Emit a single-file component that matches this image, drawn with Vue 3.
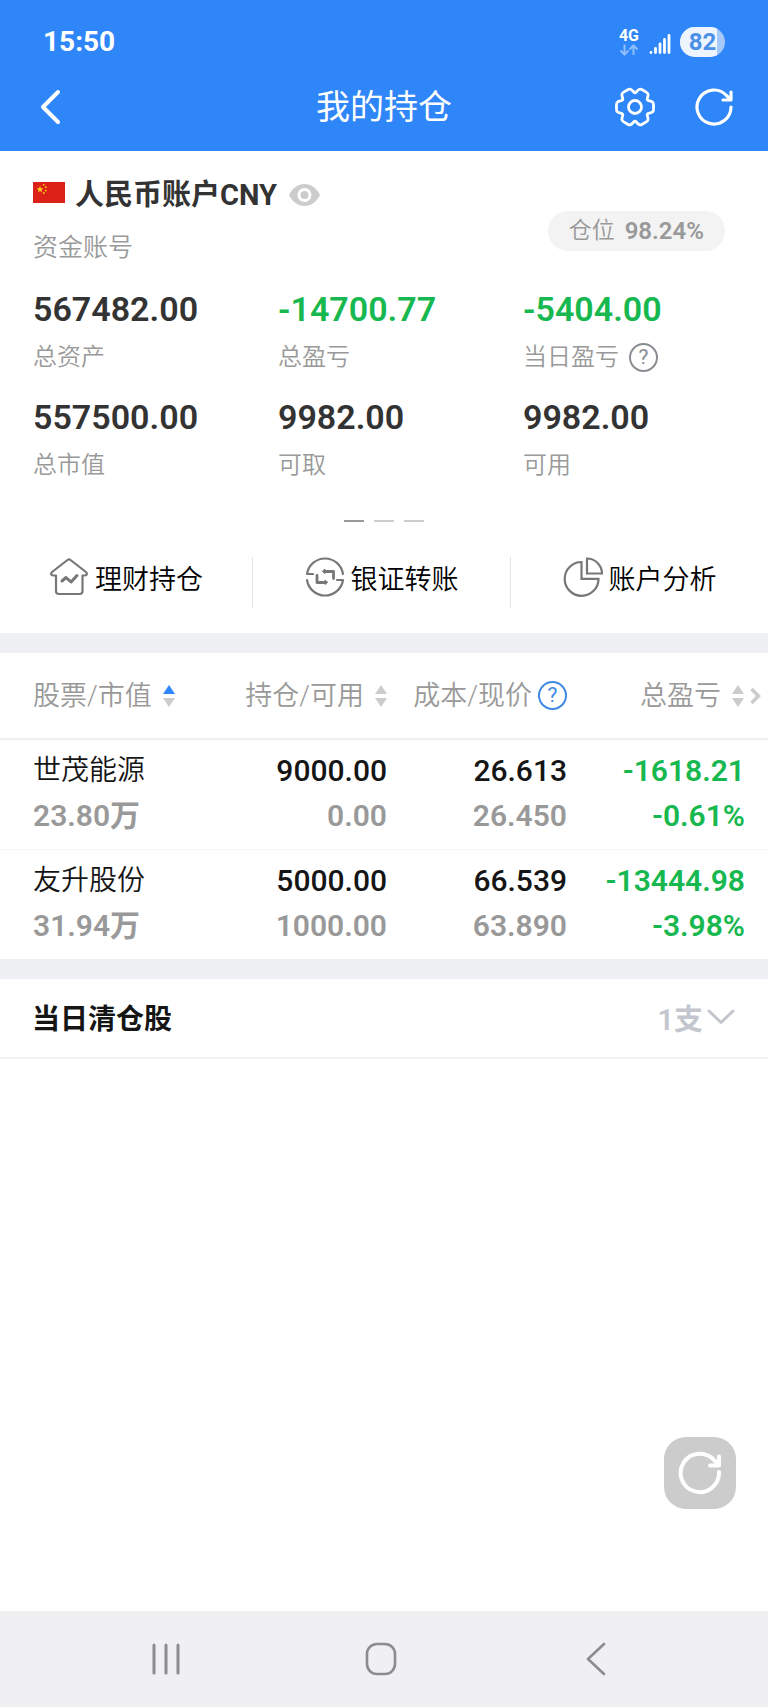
<script setup>
import { computed } from 'vue'

const battery = 82

const metrics = [
  { value: '567482.00', label: '总资产' },
  { value: '-14700.77', label: '总盈亏' },
  { value: '-5404.00', label: '当日盈亏', help: true },
  { value: '557500.00', label: '总市值' },
  { value: '9982.00', label: '可取' },
  { value: '9982.00', label: '可用' },
]

const holdings = [
  { name: '世茂能源', worth: '23.80万', held: '9000.00', usable: '0.00', cost: '26.613', price: '26.450', gain: '-1618.21', rate: '-0.61%' },
  { name: '友升股份', worth: '31.94万', held: '5000.00', usable: '1000.00', cost: '66.539', price: '63.890', gain: '-13444.98', rate: '-3.98%' },
]

const isLoss = (text) => text.startsWith('-')

// Six-toothed gear outline with rounded corners, centred on the origin.
const gearPath = computed(() => {
  const corners = []
  for (let k = 0; k < 6; k++) {
    for (const [offset, radius] of [[-30, 13.5], [-19, 17.5], [-13, 19], [13, 19], [19, 17.5]]) {
      const a = ((k * 60 + offset) * Math.PI) / 180
      corners.push([radius * Math.cos(a), radius * Math.sin(a)])
    }
  }
  const n = corners.length
  let d = ''
  corners.forEach((p, i) => {
    const before = corners[(i + n - 1) % n]
    const after = corners[(i + 1) % n]
    const toward = (q) => {
      const len = Math.hypot(q[0] - p[0], q[1] - p[1])
      const t = Math.min(2, len / 2) / len
      return `${(p[0] + (q[0] - p[0]) * t).toFixed(2)} ${(p[1] + (q[1] - p[1]) * t).toFixed(2)}`
    }
    d += `${i ? 'L' : 'M'}${toward(before)}Q${p[0].toFixed(2)} ${p[1].toFixed(2)} ${toward(after)}`
  })
  return d + 'Z'
})
</script>

<template>
  <div class="page">
    <header class="top">
      <div class="status">
        <span class="clock">15:50</span>
        <div class="signals">
          <div class="network">
            <span>4G</span>
            <svg width="20" height="12" viewBox="0 0 20 12" fill="none" stroke="#8fbdfb" stroke-width="2">
              <path d="M5.500 .5V10M1.500 6.500l4 4 4-4M14.500 11V1.500M10.500 5.500l4-4 4 4" />
            </svg>
          </div>
          <svg class="bars" width="22" height="22" viewBox="0 0 22 22" stroke="#fff" stroke-width="2.8" stroke-linecap="round">
            <path d="M2 19.500v0M6.500 15.500v4M11 11v8.500M15.500 6.500v13M20 2.500v17" />
          </svg>
          <div class="battery">
            <div class="charge" :style="{ width: battery + '%' }"></div>
            <span>{{ battery }}</span>
          </div>
        </div>
      </div>
      <nav class="bar">
        <button class="icon-btn" aria-label="返回">
          <svg width="22" height="36" viewBox="0 0 22 36" fill="none" stroke="#fff" stroke-width="4" stroke-linecap="round" stroke-linejoin="round">
            <path d="M19 3 4 18l15 15" />
          </svg>
        </button>
        <h1>我的持仓</h1>
        <div class="tools">
          <button class="icon-btn" aria-label="设置">
            <svg width="42" height="42" viewBox="-21 -21 42 42" fill="none" stroke="#fff" stroke-width="2.800" stroke-linejoin="round">
              <path :d="gearPath" />
              <circle r="6.500" />
            </svg>
          </button>
          <button class="icon-btn" aria-label="刷新">
            <svg width="40" height="40" viewBox="-20 -20 40 40" fill="none" stroke="#fff" stroke-width="3.200" stroke-linecap="round" stroke-linejoin="round">
              <path d="M17 0A17 17 0 1 1 12.500-11.500L16-8" />
              <path d="M17-15v8H9" />
            </svg>
          </button>
        </div>
      </nav>
    </header>

    <main class="content">
      <section class="account">
        <div class="head">
          <div>
            <h2 class="currency">
              <svg class="flag" width="32" height="21" viewBox="0 0 32 21">
                <path d="M0 0h32v21H0z" fill="#dc2118" />
                <g fill="#fbd21c">
                  <path d="m7 4 .9 2.300 2.500.1-2 1.500.7 2.400L7 8.900l-2.100 1.400.7-2.400-2-1.500 2.500-.1z" />
                  <circle cx="10.800" cy="2.800" r=".9" />
                  <circle cx="12.800" cy="5.200" r=".9" />
                  <circle cx="12.800" cy="8.600" r=".9" />
                  <circle cx="10.800" cy="11" r=".9" />
                </g>
              </svg>
              人民币账户CNY
              <button class="icon-btn" aria-label="隐藏金额">
                <svg width="31" height="24" viewBox="0 0 31 24">
                  <path d="M0 12C4 4.500 9 1 15.500 1S27 4.500 31 12c-4 7.500-9 11-15.500 11S4 19.500 0 12z" fill="#ccc" />
                  <circle cx="15.500" cy="12" r="5.500" fill="#ccc" stroke="#fff" stroke-width="3" />
                </svg>
              </button>
            </h2>
            <p class="number">资金账号</p>
          </div>
          <p class="ratio">仓位 <b>98.24%</b></p>
        </div>

        <dl class="metrics">
          <div v-for="m in metrics" :key="m.label">
            <dt>
              {{ m.label }}
              <button v-if="m.help" class="help" aria-label="当日盈亏说明">?</button>
            </dt>
            <dd :class="{ loss: isLoss(m.value) }">{{ m.value }}</dd>
          </div>
        </dl>

        <div class="pager"><i class="on"></i><i></i><i></i></div>

        <div class="actions">
          <button>
            <svg width="40" height="40" viewBox="0 0 40 40" fill="none" stroke="#777" stroke-width="2.200" stroke-linecap="round" stroke-linejoin="round">
              <path d="M7 18.500H4.500Q.5 18 3 15L18.500 3q1.500-1.200 3 0L37 15q2.500 3-1.500 3.500H33.500V34q0 3-3 3H10q-3 0-3-3z" />
              <path d="m13 24 4-3.500 5 4.500 6-6.500" stroke-width="3" />
            </svg>
            理财持仓
          </button>
          <button>
            <svg width="40" height="40" viewBox="0 0 40 40" fill="none" stroke="#777" stroke-width="2.200" stroke-linecap="round" stroke-linejoin="round">
              <path d="M8 17H2A18.200 18.200 0 0 1 38 17M32 23h6A18.200 18.200 0 0 1 2 23" />
              <path d="M12 18.500V25.500h8M20 14.500h8.500V21.500" stroke-width="2.800" />
              <path d="M20 12.500v4l-2.500-2zM20 23.500v4l2.500-2z" fill="#777" stroke-width="1" />
            </svg>
            银证转账
          </button>
          <button>
            <svg width="40" height="40" viewBox="0 0 40 40" fill="none" stroke="#777" stroke-width="2.200">
              <path d="M18.500 5A16.900 16.900 0 1 0 35.500 21.900h-17z" />
              <path d="M24 1.500V16.500h15A15.200 15.200 0 0 0 24 1.500z" />
            </svg>
            账户分析
          </button>
        </div>
      </section>

      <section class="holdings">
        <table>
          <thead>
            <tr>
              <th scope="col">
                <div class="cell">
                  <button class="sort up">股票/市值
                    <svg width="12" height="22" viewBox="0 0 12 22"><path class="asc" d="M6 0l6 9H0z" /><path d="M6 22l6-9H0z" /></svg>
                  </button>
                </div>
              </th>
              <th scope="col">
                <div class="cell">
                  <button class="sort">持仓/可用
                    <svg width="12" height="22" viewBox="0 0 12 22"><path class="asc" d="M6 0l6 9H0z" /><path d="M6 22l6-9H0z" /></svg>
                  </button>
                </div>
              </th>
              <th scope="col">
                <div class="cell">
                  成本/现价
                  <button class="help blue" aria-label="成本说明">?</button>
                </div>
              </th>
              <th scope="col">
                <div class="cell">
                  <button class="sort">总盈亏
                    <svg width="12" height="22" viewBox="0 0 12 22"><path class="asc" d="M6 0l6 9H0z" /><path d="M6 22l6-9H0z" /></svg>
                  </button>
                  <svg width="11" height="18" viewBox="0 0 11 18" fill="none" stroke="#ccc" stroke-width="3.500"><path d="m1.500 2 7 7-7 7" /></svg>
                </div>
              </th>
            </tr>
          </thead>
          <tbody>
            <tr v-for="h in holdings" :key="h.name">
              <td><span class="name">{{ h.name }}</span><span class="sub">{{ h.worth }}</span></td>
              <td><span>{{ h.held }}</span><span class="sub">{{ h.usable }}</span></td>
              <td><span>{{ h.cost }}</span><span class="sub">{{ h.price }}</span></td>
              <td class="loss"><span>{{ h.gain }}</span><span>{{ h.rate }}</span></td>
            </tr>
          </tbody>
        </table>
      </section>

      <section class="cleared">
        <h2>当日清仓股</h2>
        <button aria-label="展开当日清仓股">
          1支
          <svg width="28" height="16" viewBox="0 0 28 16" fill="none" stroke="#c3c6ce" stroke-width="3" stroke-linecap="round" stroke-linejoin="round"><path d="m2 2 12 11.500L26 2" /></svg>
        </button>
      </section>

      <button class="refresh" aria-label="刷新持仓">
        <svg width="46" height="46" viewBox="-23 -23 46 46" fill="none" stroke="#fff" stroke-width="4" stroke-linecap="round" stroke-linejoin="round">
          <path d="M19-1A19.200 19.200 0 1 1 14.500-12.500L18-9" />
          <path d="M19-16.500v9h-9" />
        </svg>
      </button>
    </main>

    <footer class="system">
      <button aria-label="最近任务">
        <svg width="30" height="34" viewBox="0 0 30 34" stroke="#8c8c8e" stroke-width="3" stroke-linecap="round"><path d="M3 3v28M15 3v28M27 3v28" /></svg>
      </button>
      <button aria-label="主屏幕">
        <svg width="32" height="34" viewBox="0 0 32 34" fill="none" stroke="#8c8c8e" stroke-width="2.600"><rect x="2" y="2" width="28" height="30" rx="10" /></svg>
      </button>
      <button aria-label="后退">
        <svg width="20" height="34" viewBox="0 0 20 34" fill="none" stroke="#8c8c8e" stroke-width="2.600" stroke-linecap="round" stroke-linejoin="round"><path d="M18 2 2 17l16 15" /></svg>
      </button>
    </footer>
  </div>
</template>

<style>
body {
  margin: 0;
  background: #fff;
}
</style>

<style scoped>
.page {
  min-height: 100vh;
  display: flex;
  flex-direction: column;
  background: #fff;
  color: #151515;
  font-family: Roboto, "Noto Sans CJK SC", sans-serif;
  font-weight: 350;
}
button {
  border: 0;
  padding: 0;
  background: none;
  color: inherit;
  font: inherit;
  cursor: pointer;
}
h1, h2, p, dl, dd {
  margin: 0;
}
svg {
  display: block;
  flex: none;
}
.icon-btn {
  display: flex;
}
.loss {
  color: #17b84f;
}

.top {
  background: #2f86f8;
  color: #fff;
  padding: 0 33px 21px 39px;
}
.status {
  height: 84px;
  padding: 0 10px 0 4px;
  display: flex;
  align-items: center;
  justify-content: space-between;
}
.clock {
  font-size: 28px;
  font-weight: 700;
  line-height: 32px;
}
.signals {
  display: flex;
  align-items: center;
}
.network {
  font-size: 16px;
  font-weight: 700;
  line-height: 16px;
}
.bars {
  margin: 4px 9px 0 10px;
}
.battery {
  position: relative;
  width: 45px;
  height: 30px;
  border-radius: 15px;
  overflow: hidden;
  background: #a6c9fc;
  color: #4a90e6;
  font-size: 24px;
  font-weight: 700;
  line-height: 30px;
  text-align: center;
}
.charge {
  position: absolute;
  inset: 0 auto 0 0;
  background: #eef5ff;
}
.battery span {
  position: relative;
}
.bar {
  height: 46px;
  margin-right: 6px;
  display: grid;
  grid-template-columns: 1fr auto 1fr;
  align-items: center;
}
.bar h1 {
  font-size: 34px;
  font-weight: 400;
  line-height: 46px;
}
.tools {
  display: flex;
  align-items: center;
  justify-content: flex-end;
  gap: 38px;
  margin-right: -5px;
}

.content {
  flex: 1;
  display: flex;
  flex-direction: column;
}
.account {
  padding-bottom: 25px;
  border-bottom: 20px solid #eff0f3;
}
.head {
  display: flex;
  justify-content: space-between;
  padding: 26px 43px 23px 33px;
}
.currency {
  display: flex;
  align-items: center;
  gap: 10px;
  height: 36px;
  color: #333;
  font-size: 29px;
  font-weight: 700;
  line-height: 36px;
}
.flag {
  margin-bottom: 6px;
}
.currency .icon-btn {
  margin-left: 2px;
}
.number {
  margin-top: 17px;
  color: #999;
  font-size: 25px;
  line-height: 36px;
}
.ratio {
  display: flex;
  align-items: center;
  gap: 10px;
  align-self: flex-end;
  height: 40px;
  margin-bottom: 15px;
  padding: 0 21px;
  border-radius: 20px;
  background: #f3f3f3;
  color: #999;
  font-size: 23px;
  line-height: 40px;
}
.ratio b {
  font-size: 24px;
  font-weight: 600;
}
.metrics {
  display: grid;
  grid-template-columns: repeat(3, 1fr);
  row-gap: 24px;
  padding-left: 33px;
}
.metrics > div {
  display: flex;
  flex-direction: column-reverse;
  gap: 12px;
}
.metrics dt {
  display: flex;
  align-items: center;
  gap: 10px;
  height: 32px;
  color: #999;
  font-size: 24px;
  line-height: 32px;
}
.metrics dd {
  font-size: 34px;
  font-weight: 600;
  line-height: 40px;
}
.metrics dd:not(.loss) {
  color: #333;
}
.help {
  box-sizing: border-box;
  width: 29px;
  height: 29px;
  border: 2px solid #8a8d92;
  border-radius: 50%;
  color: #8a8d92;
  font-size: 21px;
  font-weight: 400;
  line-height: 25px;
  text-align: center;
}
.help.blue {
  border-color: #3f8ae4;
  color: #3f8ae4;
}
.pager {
  display: flex;
  justify-content: center;
  gap: 10px;
  margin: 39px 0 35px;
}
.pager i {
  width: 20px;
  height: 2px;
  background: #ccc;
}
.pager .on {
  background: #999;
}
.actions {
  display: grid;
  grid-template-columns: 252fr 258fr 258fr;
}
.actions button {
  display: flex;
  justify-content: center;
  gap: 6px;
  height: 51px;
  color: #000;
  font-size: 27px;
  line-height: 46px;
}
.actions button + button {
  border-left: 1px solid #e4e4e4;
}

.holdings {
  border-bottom: 20px solid #eff0f3;
}
table {
  width: 100%;
  table-layout: fixed;
  border-collapse: collapse;
}
th, td {
  padding: 0;
  text-align: right;
}
th:first-child, td:first-child {
  width: 28%;
  padding-left: 33px;
  text-align: left;
}
th:nth-child(3) {
  width: 180px;
}
th:nth-child(4) {
  width: 178px;
  padding-right: 23px;
}
thead tr {
  border-bottom: 2px solid #efefef;
}
.cell, .sort {
  display: flex;
  align-items: center;
}
.cell {
  justify-content: flex-end;
  gap: 6px;
  height: 85px;
  color: #999;
  font-size: 27px;
  font-weight: 350;
  line-height: 36px;
  white-space: nowrap;
}
th:first-child .cell {
  justify-content: flex-start;
}
th:last-child .cell {
  margin-right: -16px;
}
.sort {
  gap: 11px;
}
.sort svg {
  fill: #ccc;
}
.sort.up .asc {
  fill: #2f86f8;
}
td {
  height: 106px;
  padding-bottom: 3px;
  font-size: 30px;
  font-weight: 500;
}
td:nth-child(4) {
  padding-right: 23px;
}
tbody tr + tr {
  border-top: 1px solid #f6f6f6;
}
td span {
  display: block;
  line-height: 45px;
}
td .name {
  font-size: 28px;
  font-weight: 350;
}
.sub {
  color: #999;
}
.sub, .loss span {
  font-weight: 600;
}

.cleared {
  display: flex;
  align-items: center;
  justify-content: space-between;
  height: 75px;
  padding: 0 33px 3px 32px;
  border-bottom: 2px solid #f1f1f1;
}
.cleared h2 {
  font-size: 28px;
  font-weight: 700;
}
.cleared button {
  display: flex;
  align-items: center;
  gap: 4px;
  color: #c3c6ce;
  font-size: 29px;
  font-weight: 600;
}
.refresh {
  display: flex;
  align-items: center;
  justify-content: center;
  width: 72px;
  height: 72px;
  margin: auto 32px 102px auto;
  border-radius: 22px;
  background: #ccc;
}
.system {
  display: grid;
  grid-template-columns: repeat(3, 1fr);
  height: 96px;
  padding: 0 65px 0 58px;
  background: #f0f0f3;
}
.system button {
  display: flex;
  align-items: center;
  justify-content: center;
}
</style>
